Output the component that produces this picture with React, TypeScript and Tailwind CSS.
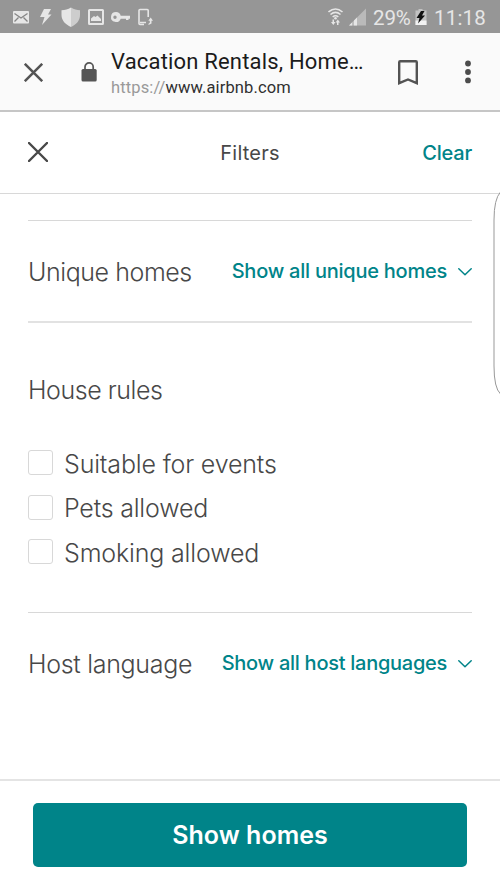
import React from "react";

function StatusBar() {
  return (
    <div className="flex h-[33px] shrink-0 items-center bg-[#969696] pl-3 pr-[14px] font-['Roboto',sans-serif] text-[#e6e6e6]">
      <svg width="142" height="33" viewBox="12 0 142 33" fill="#e6e6e6">
        <rect x="13" y="11" width="16" height="12.5" rx="1" />
        <path d="M14.5 13.5 21 18l6.500-4.500M14.500 21.500l4-4M27.500 21.500l-4-4" fill="none" stroke="#858585" strokeWidth="1.300" />
        <path d="M44 9h7l-3 5.500h3.500L42 25l2.500-8H40z" />
        <path d="M71 7.500c-3 2-6 2.600-9.500 2.800V15c0 5.500 4 9.500 9.500 12z" />
        <path d="M71 7.500c3 2 6 2.600 9 2.800V15c0 5.500-3.500 9.500-9 12z" fill="#cdcdcd" />
        <path fillRule="evenodd" d="M89.500 9h13a1.500 1.500 0 0 1 1.500 1.500v13a1.500 1.500 0 0 1-1.500 1.500h-13a1.500 1.500 0 0 1-1.500-1.500v-13A1.500 1.500 0 0 1 89.500 9zm.5 2v12h12V11z" />
        <path d="M91 21v-2.500l3-2.500 1.500 1 2-1.500L101 19v2z" />
        <path fillRule="evenodd" d="M116 12a5 5 0 0 1 4.700 3.700H130v3h-1.500V20H126v-1.300h-5.300A5 5 0 1 1 116 12zm-1 3.500a1.700 1.700 0 1 0 0 3.400 1.700 1.700 0 0 0 0-3.400z" />
        <path d="M148.200 17V10.500q0-1-1-1H140q-1 0-1 1v13q0 1 1 1h4M140 22.500h6" fill="none" stroke="#e6e6e6" strokeWidth="1.600" />
        <path d="m150.700 17.500 2.300 3.200h-1.500v2.800l-3 1.500v-1.200l1.300-1v-2.100h-1.500z" />
      </svg>
      <div className="ml-auto flex items-center">
        <svg width="40" height="33" viewBox="328 0 40 33" fill="none">
          <path d="M328.500 12q7-6 14 0M330.500 14.500q5-4.200 10 0M332.700 17q2.800-2.500 5.600 0" stroke="#e6e6e6" strokeWidth="1.600" />
          <circle cx="335.500" cy="18.300" r="1.300" fill="#e6e6e6" />
          <path d="M331 22h1.500v-2.500h1.500V22h1.500l-2.200 3zM335.600 22.500l2.200-3 2.200 3h-1.500V25H337v-2.500z" fill="#e6e6e6" />
          <path d="M366 8.500V25.500H349z" fill="#bababa" />
          <path d="M357 17.500v8h-8z" fill="#e6e6e6" />
          <path d="M353 20v6" stroke="#969696" />
        </svg>
        <span className="ml-[5px] w-[39px] whitespace-nowrap pt-[3px] text-[20.500px] leading-[33px] tracking-[-0.100px]">29%</span>
        <svg className="ml-[3px]" width="12" height="33" viewBox="415 0 12 33">
          <path d="M418.500 9h4v1.500h4V25H415.500V10.500h3z" fill="#c2c2c2" />
          <path d="M415.500 20.500h11V25h-11z" fill="#f2f2f2" />
          <path d="m421 11-4.500 7h3l-1.500 5.500 7-8h-3l2.500-4.500z" fill="#111" />
        </svg>
        <span className="ml-[7px] w-[52px] whitespace-nowrap pt-[3px] text-[20.500px] leading-[33px] tracking-[0.200px]">11:18</span>
      </div>
    </div>
  );
}

function BrowserBar() {
  return (
    <div className="flex h-[79px] shrink-0 items-center border-b-2 border-[#c6c6c6] bg-[#fafafa] pl-6 pt-px">
      <svg width="19" height="19" viewBox="0 0 19 19" fill="none" stroke="#535353" strokeWidth="2.500">
        <path d="m.8.800 17.400 17.400M18.200.800.800 18.200" />
      </svg>
      <svg className="ml-[38px]" width="16" height="20" viewBox="0 0 16 20">
        <rect x=".5" y="7" width="15.200" height="12.500" rx="1.500" fill="#555" />
        <path d="M4 8V5a4 4 0 0 1 8.200 0v3" fill="none" stroke="#555" strokeWidth="1.700" />
      </svg>
      <div className="ml-[14px] flex w-[254px] flex-col whitespace-nowrap pt-[3px] font-['Roboto',sans-serif]">
        <span className="text-[22px] leading-7 tracking-[0.180px] text-[#1b1b1b]">Vacation Rentals, Home…</span>
        <span className="text-[16.500px] leading-6 tracking-[0.120px] text-[#303030]">
          <span className="text-[#999]">https://</span>www.airbnb.com
        </span>
      </div>
      <svg className="ml-[33px]" width="20" height="25" viewBox="0 0 20 25" fill="none" stroke="#535353" strokeWidth="2.400">
        <path d="M1.200 2.200q0-1 1-1h15.600q1 0 1 1v21L10 19.500l-8.800 3.700z" />
      </svg>
      <svg className="ml-[47px]" width="6" height="24" viewBox="0 0 6 24" fill="#4c4c4c">
        <circle cx="3" cy="3.500" r="2.900" />
        <circle cx="3" cy="12" r="2.900" />
        <circle cx="3" cy="20.400" r="2.900" />
      </svg>
    </div>
  );
}

function ShowAll({ label, spacing }: { label: string; spacing: string }) {
  return (
    <button className="flex items-center gap-[11px] text-[#008489]">
      <span className={`whitespace-nowrap pb-0.5 text-[20px] font-medium leading-6 ${spacing}`}>{label}</span>
      <svg width="14" height="8" viewBox="0 0 14 8" fill="none" stroke="#008489" strokeWidth="1.500" strokeLinecap="round" strokeLinejoin="round">
        <path d="m.8.800 6.200 6 6.200-6" />
      </svg>
    </button>
  );
}

const rules = [
  { label: "Suitable for events", spacing: "tracking-[-0.160px]" },
  { label: "Pets allowed", spacing: "tracking-[-0.200px]" },
  { label: "Smoking allowed", spacing: "tracking-[-0.160px]" },
];

export default function App() {
  return (
    <div className="relative flex h-[889px] w-[500px] flex-col overflow-hidden bg-white font-['Inter',sans-serif] text-[#484848]">
      <StatusBar />
      <BrowserBar />
      <header className="grid h-[82px] shrink-0 grid-cols-3 items-center border-b border-[#d8d8d8] px-7 text-[20px]">
        <svg className="-mt-0.5" width="20" height="20" viewBox="0 0 20 20" fill="none" stroke="#484848" strokeWidth="2.400" strokeLinecap="round">
          <path d="m1 1 18 18M19 1 1 19" />
        </svg>
        <span className="text-center tracking-[0.200px]">Filters</span>
        <span className="text-right font-medium tracking-[-0.200px] text-[#008489]">Clear</span>
      </header>
      <main className="flex grow flex-col px-7 pt-[26px]">
        <section className="flex h-[101px] items-center justify-between border-t border-[#d8d8d8]">
          <h2 className="whitespace-nowrap pt-[3px] text-[25px] font-light tracking-[-0.430px]">Unique homes</h2>
          <div className="pt-[2px]">
            <ShowAll label="Show all unique homes" spacing="tracking-[-0.240px]" />
          </div>
        </section>
        <section className="flex h-[291px] flex-col border-t-2 border-[#e2e2e2] pt-[49px]">
          <h2 className="text-[25px] font-light leading-9 tracking-[-0.450px]">House rules</h2>
          <div className="mt-[37px] flex flex-col gap-[8.500px]">
            {rules.map((r) => (
              <label key={r.label} className="flex h-9 items-center gap-[11px]">
                <span className="mb-px size-[25px] rounded-[3px] border-[1.500px] border-[#d8d8d8]" />
                <span className={`whitespace-nowrap pt-px text-[25px] font-light leading-9 ${r.spacing}`}>{r.label}</span>
              </label>
            ))}
          </div>
        </section>
        <section className="flex h-[102px] items-center justify-between border-t border-[#d8d8d8]">
          <h2 className="whitespace-nowrap pt-0.5 text-[25px] font-light tracking-[-0.300px]">Host language</h2>
          <ShowAll label="Show all host languages" spacing="tracking-[-0.270px]" />
        </section>
      </main>
      <footer className="h-[110px] shrink-0 border-t-2 border-[#e4e4e4] px-[33px] pt-[22px]">
        <button className="h-16 w-full rounded-[5px] bg-[#008489] pt-[2px] text-[25px] font-semibold tracking-[0.050px] text-white">Show homes</button>
      </footer>
      <svg className="absolute right-0 top-[190px]" width="8" height="206" viewBox="492 190 8 206" fill="#fff" stroke="#999" strokeWidth="1">
        <path d="M500.500 192Q494 199 494 220V366Q494 388 500.500 394" />
      </svg>
    </div>
  );
}
